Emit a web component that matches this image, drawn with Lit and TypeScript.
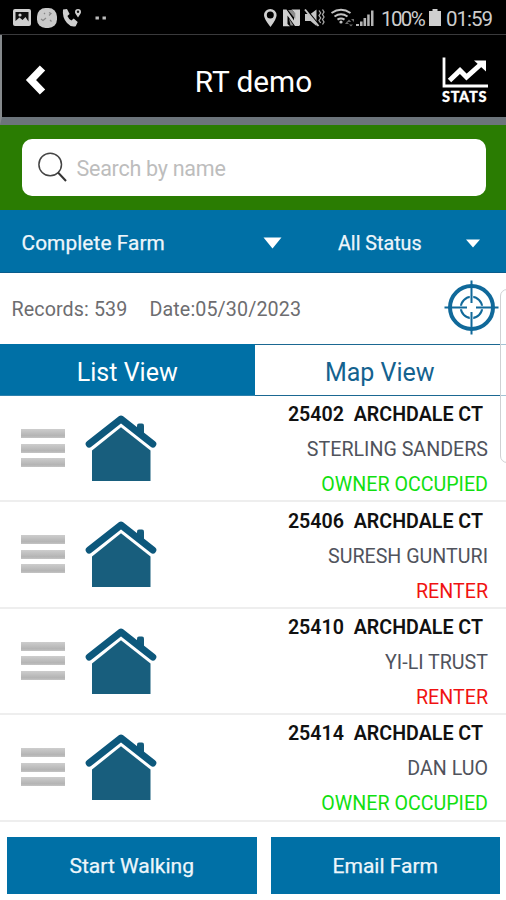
import { LitElement, html, css, svg } from "lit";
import { customElement, property } from "lit/decorators.js";

interface FarmRecord {
  num: string;
  street: string;
  owner: string;
  status: "OWNER OCCUPIED" | "RENTER";
}

const records: FarmRecord[] = [
  { num: "25402", street: "ARCHDALE CT", owner: "STERLING SANDERS", status: "OWNER OCCUPIED" },
  { num: "25406", street: "ARCHDALE CT", owner: "SURESH GUNTURI", status: "RENTER" },
  { num: "25410", street: "ARCHDALE CT", owner: "YI-LI TRUST", status: "RENTER" },
  { num: "25414", street: "ARCHDALE CT", owner: "DAN LUO", status: "OWNER OCCUPIED" },
];

@customElement("farm-row")
class FarmRow extends LitElement {
  @property({ attribute: false }) record!: FarmRecord;

  static styles = css`
    :host { display: flex; height: 106.4px; box-sizing: border-box; border-bottom: 2px solid #eeeeee; }
    .handle { display: flex; flex-direction: column; gap: 5.5px; padding: 33px 0 0 21px; width: 44px; flex: none; }
    .bar { height: 9px; background: linear-gradient(#cdcdcd, #b4b4b4 75%, #c4c4c4); }
    .house { flex: none; width: 72px; height: 67px; margin: 19px 0 0 20px; }
    .text { flex: 1; text-align: right; padding: 1.300px 18px 0 0; font-size: 19.650px; }
    .line { height: 35px; line-height: 35px; white-space: pre; }
    .addr { font-weight: 600; color: #111; padding-right: 5px; }
    .owner { color: #50535c; }
    .occupied { color: #10e010; }
    .renter { color: #f01212; }
  `;

  render() {
    const r = this.record;
    return html`
      <div class="handle"><div class="bar"></div><div class="bar"></div><div class="bar"></div></div>
      <svg class="house" viewBox="0 0 72 67">
        <path d="M7 35.500 36 12.300 65.500 35.500V66H7z" fill="#185e7d" />
        <path d="M52 20V10.5q0-2 2-2h3q2 0 2 2V24z" fill="#135b7c" />
        <path d="M4.2 29 36 4 67.8 29" fill="none" stroke="#0d587c" stroke-width="7" stroke-linecap="round" stroke-linejoin="round" />
      </svg>
      <div class="text">
        <div class="line addr">${r.num}  ${r.street}</div>
        <div class="line owner">${r.owner}</div>
        <div class="line ${r.status === "RENTER" ? "renter" : "occupied"}">${r.status}</div>
      </div>
    `;
  }
}

const statusLeft = svg`
  <rect x="13" y="9" width="18" height="17" rx="2" fill="#d0d0d0"/>
  <path d="M15.500 12h13v9.500l-3-4.500-3 3-3-2.500-4 3.500z" fill="#111"/>
  <circle cx="20" cy="15" r="1.600" fill="#d0d0d0"/>
  <rect x="37" y="8" width="20" height="20" rx="8.500" fill="#cacaca"/>
  <path d="M41 19l2 1.500 3-2.500M49 12.500l2 1-2 2M50 20l1.500 1.500M44 13l1 1" stroke="#888" fill="none" stroke-width="1.200"/>
  <path d="M63 9.500l4-.6 2.600 5-2.200 2.200q1.200 3 4 4.400l2.300-1.900 4 3.300-2 4.300q-4.500 1.500-8.700-3.200Q62 17.500 63 9.500z" fill="#cfcfcf"/>
  <path d="M78 17.500l-2.300-3.500q-.7-1-.7-2a3 3 0 0 1 6 0q0 1-.7 2z" fill="#cfcfcf"/>
  <circle cx="78" cy="11.800" r="1.200" fill="#111"/>
  <path d="M95.500 16.500h3.400v3h-3.400zM102.500 16.500h3.400v3h-3.400z" fill="#bcbcbc"/>
`;

const statusRight = svg`
  <path fill-rule="evenodd" d="M6.500 27Q0 19 0 15.300a6.300 6.300 0 0 1 12.600 0Q12.600 19 6.500 27zM6.300 11.500a3.500 3.500 0 1 0 0 7 3.500 3.500 0 0 0 0-7z" fill="#d0d0d0"/>
  <path d="M19 9.500l3.500 0 7.500 11V12l-2.500-2.500H36v15.500l-1 1h-4L23.500 15.500V24l2.500 2.200H19z" fill="#cfcfcf"/>
  <path d="M24 10h4l3.300 3v6zM26.500 25.500h3l-4.500-7z" fill="#8d8d8d"/>
  <path d="M41 14h5.500l6-4.500v16.500l-6-5H41z" fill="#c6c6c6"/>
  <path d="M42 9.500l13 16" stroke="#000" stroke-width="2"/>
  <path d="M41 9.500l13.500 16.500" stroke="#c6c6c6" stroke-width="1.900"/>
  <path d="M55 10.500l1.700 2.500-1.700 2.500 1.700 2.500-1.700 2.500 1.700 2.500M58.500 9.500l1.500 2.500-1.500 2.500 1.500 2.500-1.500 2.500 1.500 2.500-1.500 2.500" fill="none" stroke="#aaa" stroke-width="1.300"/>
  <path d="M67.500 13q9.500-6.500 19 0M70.500 16.500q6.500-4.500 13 0M73.500 19.700q3.500-2.300 7 0" fill="none" stroke="#c4c4c4" stroke-width="2"/>
  <circle cx="77" cy="22" r="1.600" fill="#c4c4c4"/>
  <path d="M81 24l2-2.600 2 2.600zM85 19.500l2.200 2.500h-4.400zM85 24.500h4l-2 2zM87 19h3v3z" fill="#6c6c6c"/>
  <path d="M92 26v-2h3v2zM96 26v-4.500h2.600V26zM99.500 26v-8h2.600v8zM103.200 26V14.500h2.500V26zM107 26V10.500h2.500V26z" fill="#b5b5b5"/>
`;

@customElement("app-root")
class AppRoot extends LitElement {
  static styles = css`
    :host { display: block; position: relative; width: 506px; height: 900px; overflow: hidden; background: #fff;
      font-family: Roboto, "Liberation Sans", sans-serif; }
    * { box-sizing: border-box; }
    svg { display: block; flex: none; }
    .status { height: 35px; background: #000; border-bottom: 1px solid #3a3a3c; display: flex; }
    .grow { flex: 1; }
    .pct, .clock { font-size: 20.5px; line-height: 38px; height: 34px; color: #cdcdcd; flex: none; white-space: nowrap; }
    .pct { width: 49px; letter-spacing: -1.6px; padding-left: 1px; }
    .clock { width: 60px; letter-spacing: -1px; }
    .batt { width: 17px; }
    .header { height: 90px; background: #000; border-left: 2px solid #85898c; border-bottom: 8px solid #6c747b; display: flex; }
    .back { width: 60px; }
    .title { flex: 1; text-align: center; color: #fff; font-size: 29.800px; line-height: 94px; padding-left: 21px; }
    .stats { width: 82px; display: flex; flex-direction: column; padding: 22px 0 0 18px; }
    .stats-label { font: 900 14.500px/15px Lato, sans-serif; color: #fff; height: 14px; letter-spacing: 0.7px; -webkit-text-stroke: 0.3px #fff; }
    .search { height: 85px; background: #2a7c02; padding: 14px 20.500px 14px 21.500px; }
    .box { height: 57px; border-radius: 10px; background: #fff; display: flex; padding-left: 15px; }
    .ph { font-size: 21.500px; letter-spacing: -0.26px; line-height: 60px; color: #bdbdbd; padding-left: 10px; }
    .filters { height: 63px; background: #0070a6; border-bottom: 1px solid #085c8c; display: flex; align-items: center; color: #eef6fb; font-size: 20.800px; padding-top: 4px; }
    .f1 { width: 263px; padding-left: 21.500px; letter-spacing: 0.1px; -webkit-text-stroke: 0.25px #eef6fb; }
    .f2 { width: 129px; margin-left: 56px; margin-right: -1px; font-size: 19.700px; -webkit-text-stroke: 0.25px #eef6fb; }
    .meta { height: 71px; display: flex; color: #6d6d70; font-size: 19.700px; line-height: 74px; letter-spacing: 0.1px; }
    .recs { padding-left: 11.500px; width: 149.500px; }
    .date { flex: 1; }
    .target { margin: 7px 7px 0 0; }
    .tabs { height: 52px; display: flex; font-size: 25px; line-height: 58px; text-align: center; }
    .tab { width: 254.500px; background: #0070a6; color: #fff; border-bottom: 1px solid #2d81ad; }
    .tab2 { flex: 1; line-height: 55px; color: #14628f; border: 1.500px solid #1b6892; border-right: 0; border-left: 0; background: #fff; padding-right: 1px; }
    .actions { display: flex; gap: 14px; padding: 15.500px 6px 0 7px; }
    .btn { flex: 1; height: 57px; background: #0070a6; color: #edf6fb; text-align: center; font-size: 21px; line-height: 59px; -webkit-text-stroke: 0.25px #edf6fb; }
    .btn.wide { flex: none; width: 249.500px; }
    .edge { position: absolute; left: 500px; top: 289px; width: 20px; height: 174px; border: 1px solid #cfd1d3; border-radius: 7px; background: #ffffff99; }
  `;

  render() {
    return html`
      <div class="status">
        <svg width="110" height="34" viewBox="0 0 110 34">${statusLeft}</svg>
        <span class="grow"></span>
        <svg width="116" height="34" viewBox="0 0 116 34">${statusRight}</svg>
        <span class="pct">100%</span>
        <svg class="batt" width="17" height="34"><path d="M3.500 9h5v2H12v15H0V11h3.500z" fill="#cfcfcf"/></svg>
        <span class="clock">01:59</span>
      </div>
      <div class="header">
        <svg class="back" height="82" viewBox="0 0 60 82"><path d="M40.500 33 29 45 40.500 57" fill="none" stroke="#fff" stroke-width="7.400"/></svg>
        <div class="title">RT demo</div>
        <div class="stats">
          <svg width="48" height="32" viewBox="0 0 48 32">
            <path d="M2 0.500V29H46" fill="none" stroke="#fff" stroke-width="2.800"/>
            <path d="M7.500 23.500 18 13.500 24.500 20 38 8" fill="none" stroke="#fff" stroke-width="5"/>
            <path d="M32 3.500h12v11z" fill="#fff"/>
          </svg>
          <div class="stats-label">STATS</div>
        </div>
      </div>
      <div class="search">
        <div class="box">
          <svg width="30" height="57" viewBox="0 0 30 57">
            <circle cx="13.200" cy="25.500" r="11.300" fill="none" stroke="#444" stroke-width="1.500"/>
            <path d="M21 33.500 29 42" stroke="#333" stroke-width="2"/>
          </svg>
          <div class="ph">Search by name</div>
        </div>
      </div>
      <div class="filters">
        <div class="f1">Complete Farm</div>
        <svg width="19" height="12"><path d="M0.500.500h18l-9 11z" fill="#fff"/></svg>
        <div class="f2">All Status</div>
        <svg width="14" height="9"><path d="M0 .500h14l-7 8z" fill="#fff"/></svg>
      </div>
      <div class="meta">
        <div class="recs">Records: 539</div>
        <div class="date">Date:05/30/2023</div>
        <svg class="target" width="55" height="55" viewBox="0 0 55 55" fill="none" stroke="#10699a">
          <circle cx="27.500" cy="27.500" r="21.500" stroke-width="4"/>
          <circle cx="27.500" cy="27.500" r="10.700" stroke-width="2"/>
          <path d="M27.500 15.500v5M27.500 34.500v5M15.500 27.500h5M34.500 27.500h5" stroke="#fff" stroke-width="3.500"/>
          <path d="M27.500.500v22.500M27.500 32v22.500M.500 27.500h22.500M32 27.500h22.500" stroke-width="2"/>
        </svg>
      </div>
      <div class="tabs"><div class="tab">List View</div><div class="tab2">Map View</div></div>
      ${records.map((r) => html`<farm-row .record=${r}></farm-row>`)}
      <div class="actions"><div class="btn wide">Start Walking</div><div class="btn">Email Farm</div></div>
      <div class="edge"></div>
    `;
  }
}
